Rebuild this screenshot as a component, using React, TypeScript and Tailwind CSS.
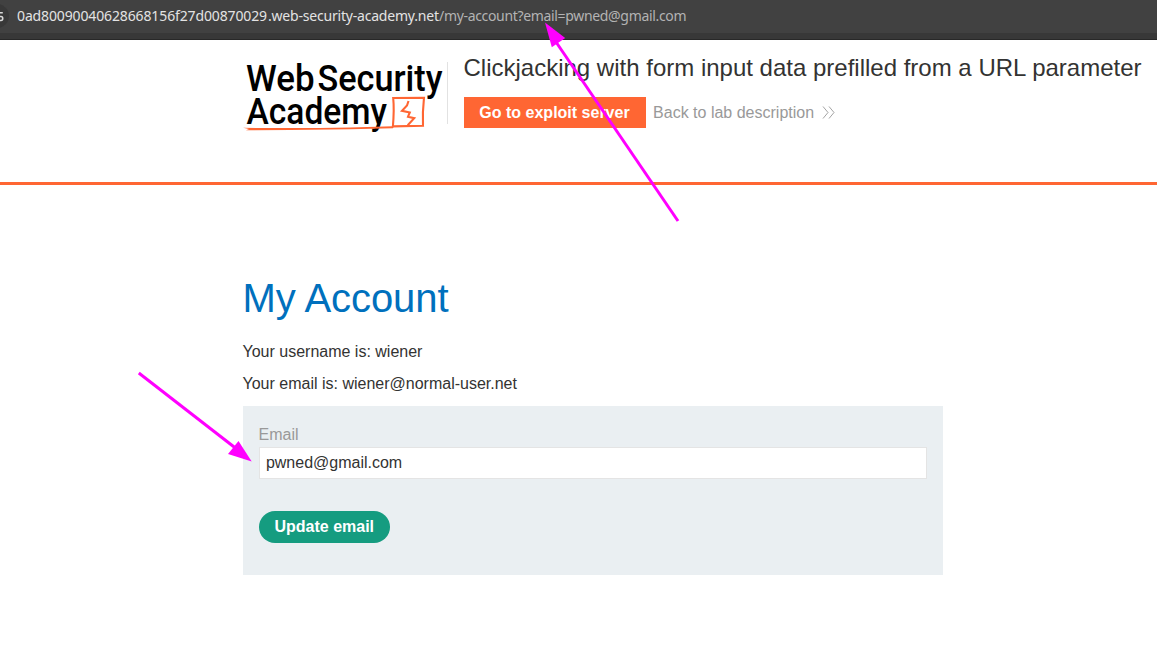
import React from 'react';

function AddressBar() {
  return (
    <div className="flex h-10 items-start border-b border-[#282828] bg-[#383838]">
      <div className="relative flex h-[33px] w-full items-center overflow-hidden bg-[#414141] pl-[17px] font-['Noto_Sans',sans-serif] text-[14px]">
        <svg className="absolute top-0 left-0" width="10" height="33" viewBox="0 0 10 33" fill="none">
          <circle cx="-3" cy="16" r="12" fill="#383838" />
          <path d="M-1 12.8H2.8M-1 16.5H1C3.3 16.5 3.3 20.5 1 20.5H-1" stroke="#d8d8d8" strokeWidth="1.6" />
        </svg>
        <span className="flex -translate-y-px leading-[32px] whitespace-nowrap">
          <span className="w-[251px] tracking-[-0.13px] text-[#e3e3e3]">0ad80090040628668156f27d00870029</span>
          <span className="w-[171px] tracking-[-0.2px] text-[#e3e3e3]">.web-security-academy.net</span>
          <span className="tracking-[-0.33px] text-[#b3b3b3]">/my-account?email=pwned@gmail.com</span>
        </span>
      </div>
    </div>
  );
}

function Logo() {
  return (
    <svg width="204" height="90" viewBox="243 48 204 90" fill="none" className="shrink-0">
      <g fill="#000" className="font-['Roboto',sans-serif] font-medium" fontSize="37.5">
        <text x="246" y="91" textLength="68.5" lengthAdjust="spacingAndGlyphs">Web</text>
        <text x="317.5" y="91" textLength="125" lengthAdjust="spacingAndGlyphs">Security</text>
        <text x="246.5" y="123.5" textLength="140.5" lengthAdjust="spacingAndGlyphs">Academy</text>
      </g>
      <path d="M243 127.8Q300 128.6 350 127.4L393 126.2V128.2L350 129.3L290 130L246 130.2L249 129Z" fill="#ff6633" />
      <path d="M392.8 127.6Q394.4 110 393.2 98L424 97.7Q422.4 112 423 125.8L393 126.4" stroke="#ff6633" strokeWidth="2.1" />
      <path d="M408.5 101L407 105.5L402 110.8L409.8 112.4L408 116.7L414.2 118.2L407.7 125.2" stroke="#ff6633" strokeWidth="2.1" />
    </svg>
  );
}

function Header() {
  return (
    <header className="flex h-[145px] items-start border-b-[3px] border-[#ff6633] pt-2 pl-[243px]">
      <Logo />
      <div className="mt-3.5 h-[62px] w-px shrink-0 bg-[#e2e2e2]" />
      <div className="mt-1.5 ml-[15.5px] whitespace-nowrap">
        <h1 className="text-[24px] leading-7">Clickjacking with form input data prefilled from a URL parameter</h1>
        <div className="mt-[15px] flex items-center">
          <a className="flex h-[31px] w-[182px] items-center justify-center bg-[#ff6633] text-[16px] font-bold text-white">Go to exploit server</a>
          <a className="ml-[7.6px] flex items-center text-[16px] text-[#999]">
            Back to lab description
            <svg className="ml-2" width="14" height="14" viewBox="0 0 14 14" fill="none" stroke="#999" strokeWidth="0.9">
              <path d="M1 0.5L6 6.5L1 12.5M7 0.5L12 6.5L7 12.5" />
            </svg>
          </a>
        </div>
      </div>
    </header>
  );
}

function Annotations() {
  return (
    <svg className="pointer-events-none absolute inset-0" width="1157" height="651" viewBox="0 0 1157 651">
      <g stroke="#ff00ff" strokeWidth="3">
        <path d="M678 221L556 42" />
        <path d="M138.8 373L238 450" />
      </g>
      <g fill="#ff00ff">
        <path d="M545 22.5L565.2 38L551.8 47.2Z" />
        <path d="M251.7 461.5L228 454L238.5 441Z" />
      </g>
    </svg>
  );
}

export default function App() {
  return (
    <div className="relative h-[651px] w-[1157px] overflow-hidden bg-white font-['Liberation_Sans',Arial,sans-serif] text-[#333332]">
      <AddressBar />
      <Header />
      <main className="ml-[242.5px] w-[700px] pt-[90px]">
        <h2 className="text-[40px] leading-[46px] tracking-[-0.08px] text-[#0070bd]">My Account</h2>
        <p className="mt-[21px] text-[16px] leading-5">Your username is: wiener</p>
        <p className="mt-3 text-[16px] leading-5">Your email is: wiener@normal-user.net</p>
        <form className="mt-3 flex h-[169px] flex-col items-start bg-[#eaeff2] px-4 pt-[19px]">
          <label className="text-[16px] leading-[20px] text-[#999]">Email</label>
          <div className="mt-[2px] flex h-8 w-full items-center border border-[#e4e4e4] bg-white px-[6.4px] text-[16px]">pwned@gmail.com</div>
          <button type="button" className="mt-8 h-8 w-[131.5px] rounded-full bg-[#159c80] text-[16px] font-bold text-white">Update email</button>
        </form>
      </main>
      <Annotations />
    </div>
  );
}
